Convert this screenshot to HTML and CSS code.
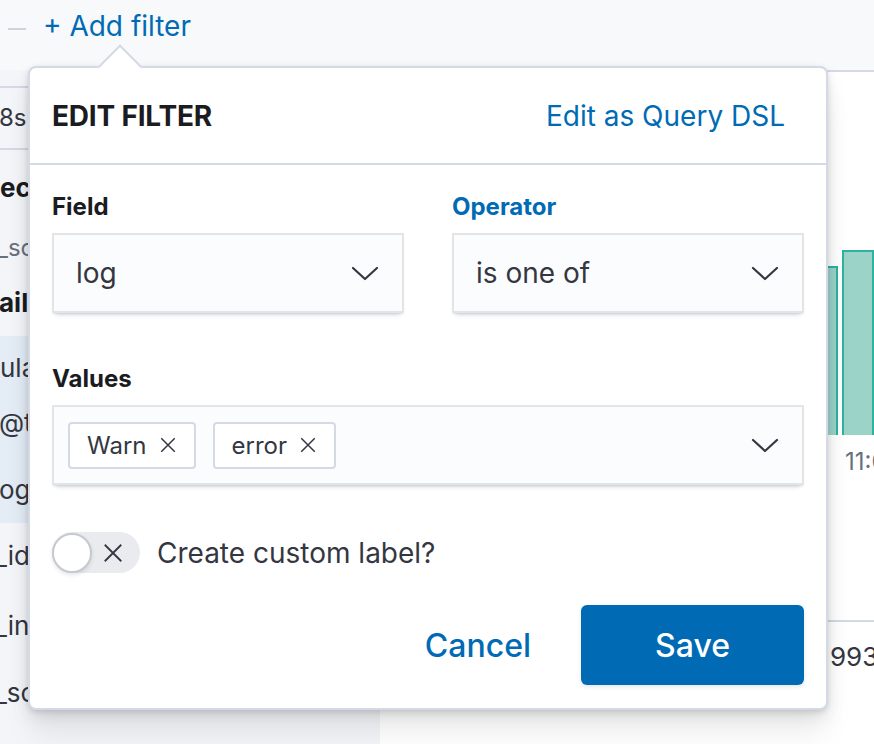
FILE: index.html
```html
<!DOCTYPE html>
<html lang="en">
<head>
<meta charset="utf-8">
<title>Edit filter</title>
<link rel="stylesheet" href="styles.css">
</head>
<body>
<div class="page">
  <header class="topbar">
    <span class="dash"></span>
    <span class="add-filter">+ Add filter</span>
  </header>
  <div class="main">
    <aside class="sidebar">
      <div class="sb-top"></div>
      <div class="sb-row sb-hits">8s</div>
      <div class="sb-row sb-sel">ec</div>
      <div class="sb-row sb-src">_sc</div>
      <div class="sb-row sb-avail">aila</div>
      <div class="sb-hl">
        <div class="sb-row sb-r1">ula</div>
        <div class="sb-row sb-r2">@t</div>
        <div class="sb-row sb-r3">og</div>
      </div>
      <div class="sb-row sb-r4">_id</div>
      <div class="sb-row sb-r5">_in</div>
      <div class="sb-row sb-r6">_sc</div>
    </aside>
    <section class="content">
      <div class="chart">
        <div class="bar bar-a"></div>
        <div class="bar bar-b"></div>
      </div>
      <div class="axis"><span class="tick">11:0</span></div>
      <div class="table-row"><span class="cell">993</span></div>
    </section>
  </div>

  <div class="popover">
    <div class="arrow"></div>
    <div class="pop-head">
      <h2 class="pop-title">EDIT FILTER</h2>
      <span class="link">Edit as Query DSL</span>
    </div>
    <div class="pop-body">
      <div class="grid">
        <div class="form-row">
          <label class="label">Field</label>
          <div class="select">
            <span class="select-text">log</span>
            <svg class="chev" viewBox="0 0 16 16"><polyline points="2,5.5 8,11 14,5.5"/></svg>
          </div>
        </div>
        <div class="form-row">
          <label class="label label-focus">Operator</label>
          <div class="select">
            <span class="select-text">is one of</span>
            <svg class="chev" viewBox="0 0 16 16"><polyline points="2,5.5 8,11 14,5.5"/></svg>
          </div>
        </div>
      </div>
      <div class="form-row values-row">
        <label class="label">Values</label>
        <div class="select combo">
          <div class="pills">
            <span class="pill">Warn<svg class="x" viewBox="0 0 16 16"><path d="M2 2L14 14M14 2L2 14"/></svg></span>
            <span class="pill">error<svg class="x" viewBox="0 0 16 16"><path d="M2 2L14 14M14 2L2 14"/></svg></span>
          </div>
          <svg class="chev" viewBox="0 0 16 16"><polyline points="2,5.5 8,11 14,5.5"/></svg>
        </div>
      </div>
      <div class="switch-row">
        <span class="switch">
          <span class="knob"></span>
          <svg class="switch-x" viewBox="0 0 16 16"><path d="M2 2L14 14M14 2L2 14"/></svg>
        </span>
        <span class="switch-label">Create custom label?</span>
      </div>
      <div class="actions">
        <span class="cancel">Cancel</span>
        <span class="save">Save</span>
      </div>
    </div>
  </div>
</div>
</body>
</html>
```

FILE: styles.css
```css
* { box-sizing: border-box; }
html, body { margin: 0; padding: 0; }
body {
  width: 874px;
  height: 744px;
  overflow: hidden;
  font-family: Inter, "Noto Sans", "Liberation Sans", sans-serif;
  color: #343741;
  background: #fff;
}
.page { position: relative; width: 874px; height: 744px; overflow: hidden; }

.topbar {
  height: 70px;
  background: #f8f9fb;
  display: flex;
  align-items: center;
  padding-left: 8px;
  padding-bottom: 18px;
}
.dash { width: 18px; height: 2px; background: #cfd4dc; margin-right: 17px; margin-top: 6px; }
.add-filter { font-size: 28px; color: #006bb4; line-height: 36px; }

.main { display: flex; height: 674px; }
.sidebar {
  width: 380px;
  background: #f3f5f8;
  font-size: 26px;
  white-space: nowrap;
  overflow: hidden;
}
.sb-top { height: 18px; border-bottom: 2px solid #d3dae6; }
.sb-row { padding-left: 0; }
.sb-hits { height: 62px; line-height: 60px; border-bottom: 2px solid #d3dae6; font-size: 24px; margin-left: -1px; }
.sb-sel { height: 76px; line-height: 76px; font-weight: 700; color: #1a1c21; }
.sb-src { height: 44px; line-height: 44px; color: #69707d; font-size: 24px; margin-left: -3px; }
.sb-avail { height: 66px; line-height: 66px; font-weight: 700; color: #1a1c21; margin-left: -1px; }
.sb-hl { background: #e4ecf5; }
.sb-r1 { height: 64px; line-height: 64px; }
.sb-r2 { height: 46px; line-height: 46px; margin-left: -1px; }
.sb-r3 { height: 77px; padding-top: 11px; line-height: 66px; margin-left: -1px; }
.sb-r4 { height: 66px; line-height: 66px; margin-left: -5px; }
.sb-r5 { height: 74px; line-height: 74px; margin-left: -5px; }
.sb-r6 { height: 60px; line-height: 60px; margin-left: -5px; }

.content {
  flex: 1;
  background: #fff;
  border-top: 2px solid #d3dae6;
  padding-left: 420px;
  white-space: nowrap;
  overflow: hidden;
}
.chart { height: 363px; display: flex; align-items: flex-end; gap: 4px; }
.bar { background: #9bd3c9; border: 2px solid #2db39f; border-bottom: none; }
.bar-a { width: 48px; height: 169px; }
.bar-b { width: 40px; height: 185px; }
.axis { margin-top: 5px; padding-left: 45px; height: 44px; line-height: 44px; font-size: 24px; color: #69707d; }
.table-row { margin-top: 136px; border-top: 2px solid #d3dae6; padding-left: 30px; line-height: 70px; font-size: 26px; color: #343741; }

.popover {
  position: absolute;
  left: 28px;
  top: 66px;
  width: 800px;
  height: 644px;
  background: #fff;
  border: 2px solid #d3dae6;
  border-radius: 8px;
  box-shadow: 0 2px 6px -1px rgba(0,0,0,0.14), 0 5px 14px -1px rgba(0,0,0,0.08), 0 11px 24px -1px rgba(0,0,0,0.06), 0 30px 30px -1px rgba(0,0,0,0.05);
}
.arrow {
  position: absolute;
  left: 74px;
  top: -17px;
  width: 32px;
  height: 32px;
  background: #fff;
  border-top: 2px solid #d3dae6;
  border-left: 2px solid #d3dae6;
  transform: rotate(45deg);
}
.pop-head {
  position: relative;
  height: 97px;
  border-bottom: 2px solid #d3dae6;
  display: flex;
  align-items: center;
  justify-content: space-between;
  padding: 0 41px 0 22px;
}
.pop-title { margin: 0; font-size: 28px; font-weight: 700; color: #1a1c21; letter-spacing: -0.2px; }
.link { font-size: 28px; color: #006bb4; }

.pop-body { padding: 26px 22px 0 22px; }
.grid { display: grid; grid-template-columns: 1fr 1fr; gap: 48px; }
.form-row { display: flex; flex-direction: column; }
.label { font-size: 24px; font-weight: 700; color: #1a1c21; line-height: 32px; margin-bottom: 10px; }
.label-focus { color: #006bb4; }
.select {
  height: 80px;
  background: #fbfcfd;
  border-radius: 1px;
  box-shadow: inset 0 0 0 2px rgba(16,22,26,0.1), 0 2px 2px -1px rgba(152,162,179,0.3), 0 6px 4px -4px rgba(152,162,179,0.35);
  display: flex;
  align-items: center;
  justify-content: space-between;
  padding: 0 23px 0 24px;
}
.select-text { font-size: 28px; color: #343741; }
.chev { width: 32px; height: 32px; fill: none; stroke: #343741; stroke-width: 1.1; stroke-linecap: round; stroke-linejoin: round; flex: none; }
.values-row { margin-top: 50px; }
.combo { padding-left: 16px; }
.pills { display: flex; gap: 17px; }
.pill {
  display: flex;
  align-items: center;
  height: 47px;
  padding: 0 17px 0 17px;
  background: #fff;
  border: 2px solid #d3dae6;
  border-radius: 4px;
  font-size: 24px;
  color: #343741;
}
.x { width: 18px; height: 18px; margin-left: 12px; fill: none; stroke: #343741; stroke-width: 1.3; }

.switch-row { display: flex; align-items: center; margin-top: 47px; height: 41px; }
.switch {
  position: relative;
  width: 88px;
  height: 41px;
  border-radius: 21px;
  background: #e9ebef;
  display: flex;
  align-items: center;
  flex: none;
}
.knob {
  width: 40px;
  height: 40px;
  border-radius: 50%;
  background: #fff;
  border: 2px solid #c5c9d0;
  box-shadow: 0 2px 4px rgba(0,0,0,0.1);
  flex: none;
}
.switch-x { width: 22px; height: 22px; margin-left: 10px; fill: none; stroke: #343741; stroke-width: 1.3; }
.switch-label { font-size: 28px; color: #343741; margin-left: 17px; }

.actions { display: flex; justify-content: flex-end; align-items: center; gap: 50px; margin-top: 32px; }
.cancel { font-size: 32px; font-weight: 500; color: #006bb4; }
.save {
  width: 223px;
  height: 80px;
  border-radius: 6px;
  background: #006bb4;
  color: #fff;
  font-size: 32px;
  font-weight: 500;
  display: flex;
  align-items: center;
  justify-content: center;
  box-shadow: 0 2px 4px rgba(0,0,0,0.1);
}
```
